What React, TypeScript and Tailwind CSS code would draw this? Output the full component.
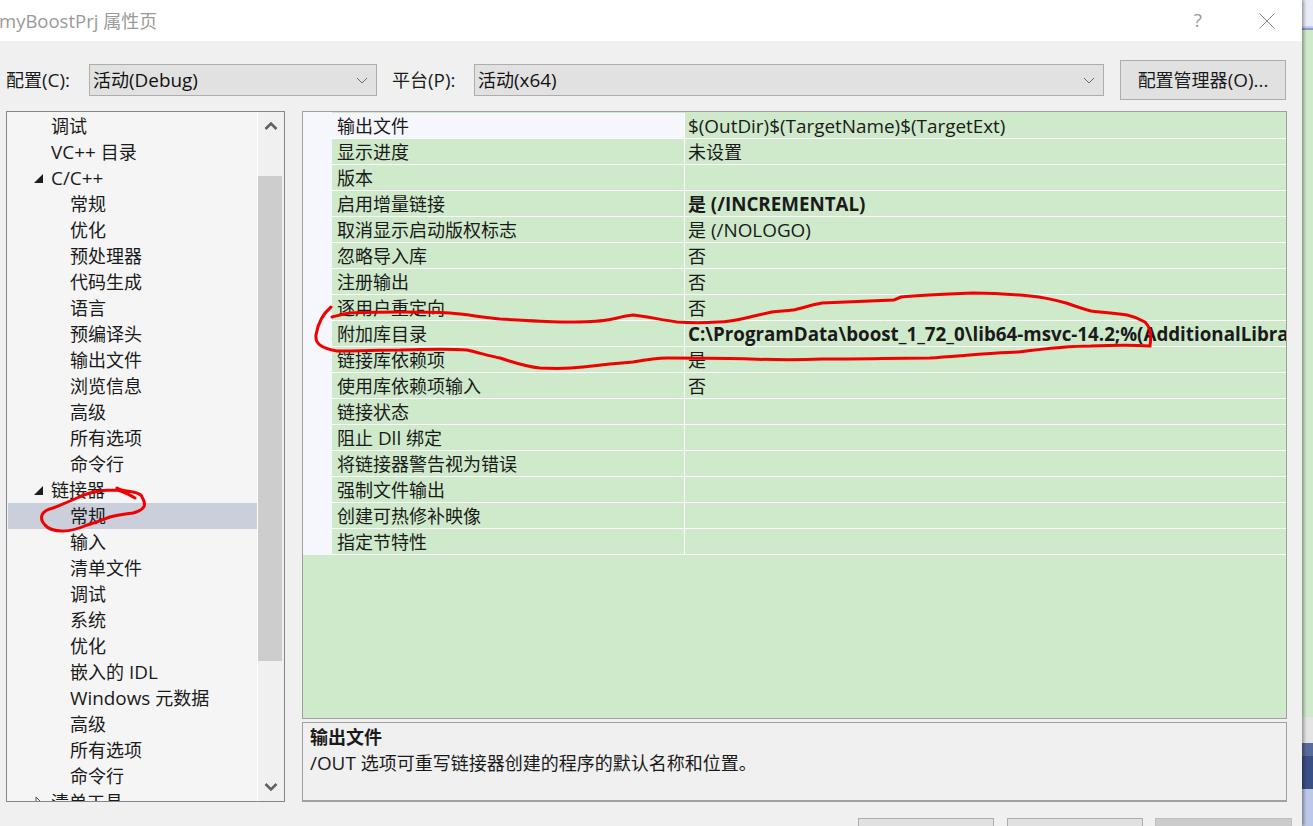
const FONT = { fontFamily: '"Open Sans", "Noto Sans CJK SC", sans-serif' }

const treeRows: { label: string; level: number; arrow?: 'open' | 'closed'; selected?: boolean }[] = [
  { label: '调试', level: 1 },
  { label: 'VC++ 目录', level: 1 },
  { label: 'C/C++', level: 1, arrow: 'open' },
  { label: '常规', level: 2 },
  { label: '优化', level: 2 },
  { label: '预处理器', level: 2 },
  { label: '代码生成', level: 2 },
  { label: '语言', level: 2 },
  { label: '预编译头', level: 2 },
  { label: '输出文件', level: 2 },
  { label: '浏览信息', level: 2 },
  { label: '高级', level: 2 },
  { label: '所有选项', level: 2 },
  { label: '命令行', level: 2 },
  { label: '链接器', level: 1, arrow: 'open' },
  { label: '常规', level: 2, selected: true },
  { label: '输入', level: 2 },
  { label: '清单文件', level: 2 },
  { label: '调试', level: 2 },
  { label: '系统', level: 2 },
  { label: '优化', level: 2 },
  { label: '嵌入的 IDL', level: 2 },
  { label: 'Windows 元数据', level: 2 },
  { label: '高级', level: 2 },
  { label: '所有选项', level: 2 },
  { label: '命令行', level: 2 },
  { label: '清单工具', level: 1, arrow: 'closed' },
]

const gridRows: { name: string; value: string; bold?: boolean }[] = [
  { name: '输出文件', value: '$(OutDir)$(TargetName)$(TargetExt)' },
  { name: '显示进度', value: '未设置' },
  { name: '版本', value: '' },
  { name: '启用增量链接', value: '是 (/INCREMENTAL)', bold: true },
  { name: '取消显示启动版权标志', value: '是 (/NOLOGO)' },
  { name: '忽略导入库', value: '否' },
  { name: '注册输出', value: '否' },
  { name: '逐用户重定向', value: '否' },
  { name: '附加库目录', value: 'C:\\ProgramData\\boost_1_72_0\\lib64-msvc-14.2;%(AdditionalLibraryDirectories)', bold: true },
  { name: '链接库依赖项', value: '是' },
  { name: '使用库依赖项输入', value: '否' },
  { name: '链接状态', value: '' },
  { name: '阻止 Dll 绑定', value: '' },
  { name: '将链接器警告视为错误', value: '' },
  { name: '强制文件输出', value: '' },
  { name: '创建可热修补映像', value: '' },
  { name: '指定节特性', value: '' },
]

// latin runs are a bit bigger than the CJK ones in the original font
function Mixed({ text, latin = 'text-[18.9px]' }: { text: string; latin?: string }) {
  return (
    <>
      {text.split(/([\x00-\x7f]+)/).map((part, i) =>
        i % 2 === 1 ? (
          <span key={i} className={latin}>
            {part}
          </span>
        ) : (
          part
        ),
      )}
    </>
  )
}

function Select({ text, className }: { text: string; className: string }) {
  return (
    <div className={`relative h-[32px] border border-[#adadad] bg-[#e1e1e1] pl-[3px] leading-[30px] text-[#111] ${className}`}>
      <Mixed text={text} />
      <svg width="12" height="8" viewBox="0 0 12 8" className="absolute right-[8px] top-[12px]">
        <path d="M1 1 L6 6 L11 1" fill="none" stroke="#707070" strokeWidth="1" />
      </svg>
    </div>
  )
}

function Tree() {
  return (
    <div className="relative h-[691px] w-[279px] shrink-0 overflow-hidden border border-[#82878f] bg-[#f5f5f5]">
      <div className="flex h-full">
        <div className="w-[251px] shrink-0 border-r border-white pt-[1px] pl-px">
          {treeRows.map((row, i) => (
            <div
              key={i}
              className={`relative h-[26px] leading-[26px] whitespace-nowrap ${row.selected ? 'bg-[#cbcedb]' : ''} ${
                row.level === 1 ? 'pl-[43px]' : 'pl-[62px]'
              }`}
            >
              {row.arrow === 'open' && (
                <svg width="10" height="10" viewBox="0 0 10 10" className="absolute left-[26px] top-[9px]">
                  <polygon points="9,0 9,9 0,9" fill="#1e1e1e" />
                </svg>
              )}
              {row.arrow === 'closed' && (
                <svg width="8" height="10" viewBox="0 0 8 10" className="absolute left-[27px] top-[8px]">
                  <polygon points="1,0 6,5 1,10" fill="none" stroke="#555" />
                </svg>
              )}
              <Mixed text={row.label} />
            </div>
          ))}
        </div>
        <div className="flex w-[26px] shrink-0 flex-col bg-[#f0f0f0]">
          <div className="flex h-[64px] shrink-0 justify-center pt-[9px]">
            <svg width="14" height="10" viewBox="0 0 14 10">
              <path d="M1.5 8 L7 2.5 L12.5 8" fill="none" stroke="#606060" strokeWidth="2.5" />
            </svg>
          </div>
          <div className="h-[485px] w-[24px] shrink-0 bg-[#cdcdcd]" />
          <div className="flex flex-1 items-end justify-center pb-[9px]">
            <svg width="14" height="10" viewBox="0 0 14 10">
              <path d="M1.5 2 L7 7.5 L12.5 2" fill="none" stroke="#606060" strokeWidth="2.5" />
            </svg>
          </div>
        </div>
      </div>
    </div>
  )
}

function PropertyGrid() {
  return (
    <div className="h-[608px] overflow-hidden border border-[#a0a0a0] bg-[#cfe9cb]">
      <div className="flex h-full items-start">
        <div className="h-[443px] w-[29px] shrink-0 bg-[#f5f7fd]" />
        <div className="min-w-0 flex-1 overflow-hidden pt-px">
          {gridRows.map((row, i) => (
            <div key={i} className="flex h-[26px] border-b border-white whitespace-nowrap">
              <div className={`w-[352px] shrink-0 pl-[5px] leading-[26px] ${i === 0 ? 'bg-[#f5f7fd]' : ''}`}>
                <Mixed text={row.name} />
              </div>
              <div className={`min-w-0 flex-1 overflow-hidden border-l border-white pl-[3px] leading-[26px] ${row.bold ? 'font-bold' : ''}`}>
                <Mixed text={row.value} latin={row.bold ? 'text-[18.75px]' : 'text-[18.9px]'} />
              </div>
            </div>
          ))}
        </div>
      </div>
    </div>
  )
}

function Annotations() {
  return (
    <svg width="1313" height="826" viewBox="0 0 1313 826" className="pointer-events-none absolute top-0 left-0 z-20">
      <path
        d="M331 307 C324 313 318 322 316 335 C315 343 320 348 337 351 C360 351 380 350 400 350 C430 349 455 349 467 350 C480 353 490 356 500 358 C515 363 530 367 540 368 C560 369 575 368 583 367 C600 365 620 363 633 362 C650 359 660 358 667 358 C700 358 730 358 750 359 C780 360 800 360 822 359 C860 359 900 358 930 358 C960 356 990 353 1019 352 C1050 348 1075 346 1091 346 C1115 345 1135 345 1150 346 C1151 338 1151 334 1150 330 C1148 325 1145 322 1145 322 C1138 318 1132 316 1127 315 C1112 313 1100 312 1091 311 C1080 308 1072 305 1066 303 C1052 299 1040 297 1030 296 C1010 294 990 293 973 293 C945 294 920 295 901 297 L894 300 C870 301 845 302 822 303 C810 305 800 309 793 310 C785 311 778 311 772 312 C762 314 755 316 750 317 C738 320 728 322 717 322 C705 323 690 323 677 322 C662 320 645 316 633 315 C622 316 615 319 607 320 C595 322 580 322 567 322 C545 322 520 320 500 319 C480 317 465 314 450 313 C430 312 415 312 400 312 C380 312 365 312 350 313 C342 314 337 316 332 317"
        fill="none"
        stroke="#f00000"
        strokeWidth="3"
        strokeLinecap="round"
      />
      <path
        d="M117 488 C121 491 128 491 133 492 C138 493 142 495 142 497 C145 502 145 506 143 508 C140 511 137 512 133 513 C125 514 117 515 110 517 C102 520 95 523 87 525 C78 529 70 531 63 531 C55 531 48 529 45 525 C41 521 41 518 42 515 C44 511 48 509 53 508 C60 505 68 502 77 498 C85 494 92 492 100 491 C106 490 112 490 117 490 C122 491 130 495 135 498"
        fill="none"
        stroke="#f00000"
        strokeWidth="3"
        strokeLinecap="round"
      />
    </svg>
  )
}

function BehindStrip() {
  return (
    <div className="flex w-[11px] shrink-0 flex-col">
      <div className="h-[26px] bg-[#e9ecf7]" />
      <div className="h-[2px] bg-[#c4d0ee]" />
      <div className="h-[2px] bg-[#8e9cc8]" />
      <div className="h-[687px] bg-[#cfe9cb]" />
      <div className="h-[26px] bg-[#e4e4e4]" />
      <div className="h-[13px] bg-[#5a6a9a]" />
      <div className="h-[33px] bg-[#3a4f85]" />
      <div className="flex-1 bg-[#bcc8e8]" />
    </div>
  )
}

export default function App() {
  return (
    <div className="relative flex h-[826px] w-[1313px] overflow-hidden text-[18px] text-[#1a1a1a]" style={FONT}>
      <div className="relative z-10 flex w-[1302px] shrink-0 flex-col bg-[#f0f0f0] shadow-[2px_0_3px_rgba(0,0,0,0.35)]">
        <div className="flex h-[41px] shrink-0 items-center justify-between bg-white pr-[27px] text-[#9a9a9a]">
          <span className="-ml-[1px]">
            <Mixed text="myBoostPrj 属性页" latin="text-[18.5px]" />
          </span>
          <div className="flex items-center gap-[57px]">
            <span className="text-[19px]">?</span>
            <svg width="16" height="16" viewBox="0 0 16 16">
              <path d="M0.5 0.5 L15.5 15.5 M15.5 0.5 L0.5 15.5" stroke="#8a8a8a" strokeWidth="1" fill="none" />
            </svg>
          </div>
        </div>

        <div className="flex h-[70px] shrink-0 items-center pt-[8px] pr-[16px] pl-[6px]">
          <span className="w-[83px] shrink-0">
            <Mixed text="配置(C):" />
          </span>
          <Select text="活动(Debug)" className="w-[288px] shrink-0" />
          <span className="ml-[15px] w-[82px] shrink-0">
            <Mixed text="平台(P):" />
          </span>
          <Select text="活动(x64)" className="w-[630px] shrink-0" />
          <button className="ml-[16px] h-[40px] w-[166px] shrink-0 border border-[#adadad] bg-[#e1e1e1]">
            <Mixed text="配置管理器(O)..." />
          </button>
        </div>

        <div className="flex gap-[17px] pl-[6px]">
          <Tree />
          <div className="flex w-[985px] shrink-0 flex-col gap-[3px]">
            <PropertyGrid />
            <div className="h-[80px] border border-b-[2px] border-[#a0a0a0] px-[7px] leading-[26px]">
              <div className="pt-[1px] font-bold">输出文件</div>
              <div>
                <Mixed text="/OUT 选项可重写链接器创建的程序的默认名称和位置。" />
              </div>
            </div>
          </div>
        </div>

        <div className="mt-[16px] flex gap-[13px] pl-[858px]">
          <div className="h-[20px] w-[136px] border border-[#adadad] bg-[#e1e1e1]" />
          <div className="h-[20px] w-[136px] border border-[#adadad] bg-[#e1e1e1]" />
          <div className="-ml-px h-[20px] w-[137px] shrink-0 border border-[#bfbfbf] bg-[#cccccc]" />
        </div>
      </div>
      <BehindStrip />
      <Annotations />
    </div>
  )
}
